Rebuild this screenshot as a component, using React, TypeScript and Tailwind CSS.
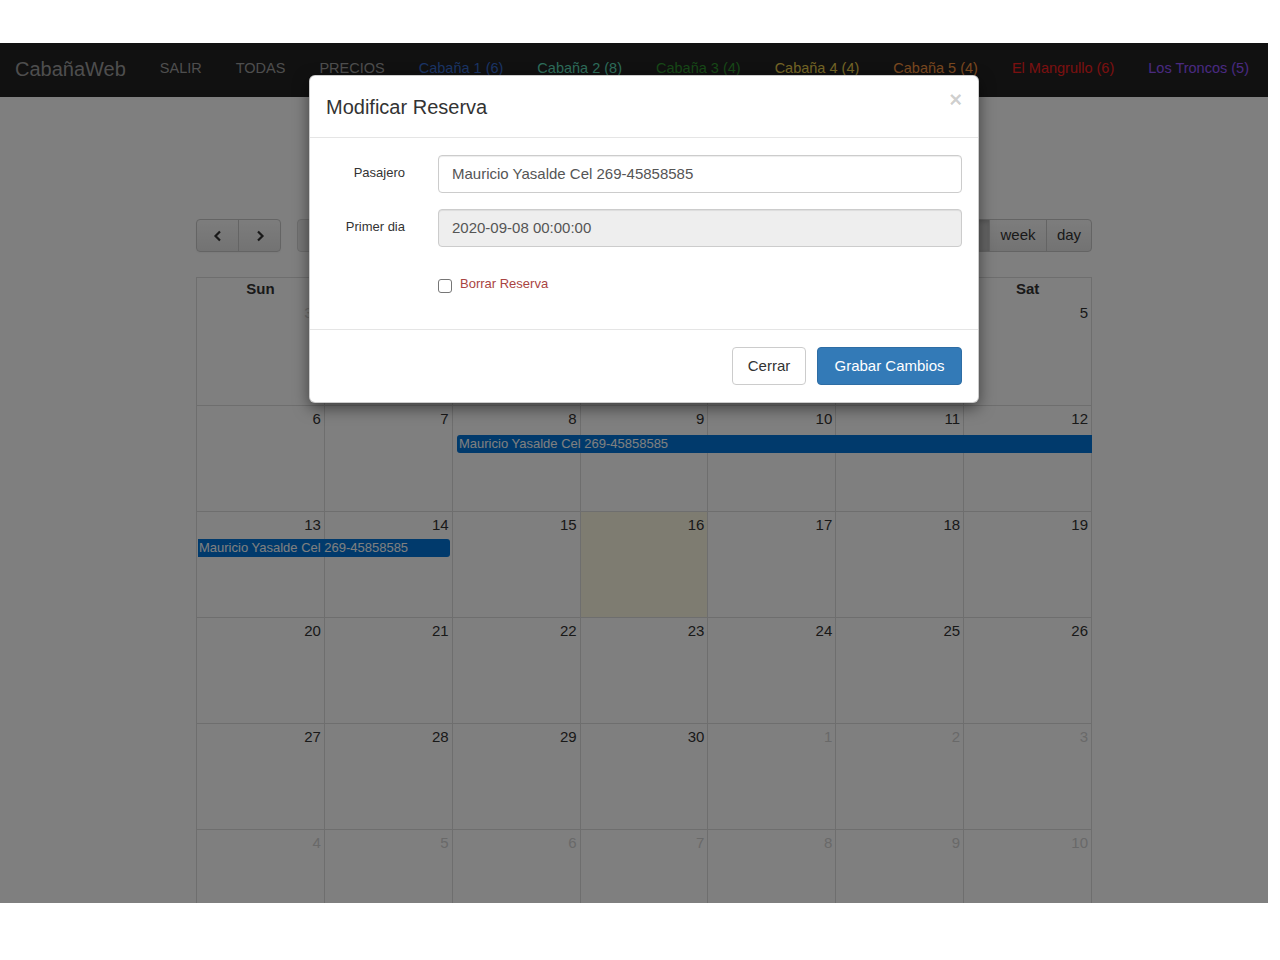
import React from "react";

type Cell = { d: number; o?: boolean; today?: boolean };

const rows: Cell[][] = [
  [{ d: 30, o: true }, { d: 31, o: true }, { d: 1 }, { d: 2 }, { d: 3 }, { d: 4 }, { d: 5 }],
  [{ d: 6 }, { d: 7 }, { d: 8 }, { d: 9 }, { d: 10 }, { d: 11 }, { d: 12 }],
  [{ d: 13 }, { d: 14 }, { d: 15 }, { d: 16, today: true }, { d: 17 }, { d: 18 }, { d: 19 }],
  [{ d: 20 }, { d: 21 }, { d: 22 }, { d: 23 }, { d: 24 }, { d: 25 }, { d: 26 }],
  [{ d: 27 }, { d: 28 }, { d: 29 }, { d: 30 }, { d: 1, o: true }, { d: 2, o: true }, { d: 3, o: true }],
  [{ d: 4, o: true }, { d: 5, o: true }, { d: 6, o: true }, { d: 7, o: true }, { d: 8, o: true }, { d: 9, o: true }, { d: 10, o: true }],
];

const days = ["Sun", "Mon", "Tue", "Wed", "Thu", "Fri", "Sat"];

const EVENT = "Mauricio Yasalde Cel 269-45858585";

function Chevron({ dir }: { dir: "l" | "r" }) {
  return (
    <svg width="10" height="12" viewBox="0 0 10 12" fill="none">
      <path
        d={dir === "l" ? "M7 1.5 L2.5 6 L7 10.5" : "M3 1.5 L7.5 6 L3 10.5"}
        stroke="#333"
        strokeWidth="2.2"
      />
    </svg>
  );
}

export default function App() {
  return (
    <div className="w-[1280px] h-[960px] bg-white pt-[43px] font-['Liberation_Sans',Arial,Helvetica,sans-serif] overflow-hidden">
      <div className="relative w-[1268px] h-[860px] overflow-hidden bg-white">
        {/* Navbar */}
        <nav className="h-[54px] bg-[#222] flex items-center pl-[15px] gap-[34px] text-[14.5px] pb-[3px]">
          <span className="text-[#9d9d9d] text-[20px]">CabañaWeb</span>
          <span className="text-[#9d9d9d]">SALIR</span>
          <span className="text-[#9d9d9d]">TODAS</span>
          <span className="text-[#9d9d9d]">PRECIOS</span>
          <span className="text-[#366acc]">Cabaña 1 (6)</span>
          <span className="text-[#5cdab6]">Cabaña 2 (8)</span>
          <span className="text-[#2f922f]">Cabaña 3 (4)</span>
          <span className="text-[#e8cc4c]">Cabaña 4 (4)</span>
          <span className="text-[#f29240]">Cabaña 5 (4)</span>
          <span className="text-[#f42020]">El Mangrullo (6)</span>
          <span className="text-[#9454ff]">Los Troncos (5)</span>
        </nav>

        {/* Calendar */}
        <div className="pl-[196px] pt-[122px]">
          <div className="w-[896px]">
            <div className="flex items-center justify-between h-[33px] mb-[25px]">
              <div className="flex items-center gap-[16px]">
                <div className="flex h-[33px] rounded-[4px] border border-[#c8c8c8] bg-gradient-to-b from-[#fafafa] to-[#e6e6e6] shadow-[inset_0_1px_0_rgba(255,255,255,0.2),0_1px_2px_rgba(0,0,0,0.05)]">
                  <div className="w-[42px] flex items-center justify-center border-r border-[#c8c8c8]">
                    <Chevron dir="l" />
                  </div>
                  <div className="w-[41px] flex items-center justify-center">
                    <Chevron dir="r" />
                  </div>
                </div>
                <div className="h-[33px] w-[60px] rounded-[4px] border border-[#c8c8c8] bg-[#e8e8e8] opacity-70" />
              </div>
              <div className="flex h-[33px] rounded-[4px] border border-[#c8c8c8] bg-gradient-to-b from-[#fafafa] to-[#e6e6e6] text-[15px] text-[#333]">
                <div className="w-[62px] flex items-center justify-center border-r border-[#c8c8c8] bg-[#cccccc] shadow-[inset_0_2px_4px_rgba(0,0,0,0.15)] rounded-l-[4px]">
                  month
                </div>
                <div className="w-[57px] flex items-center justify-center border-r border-[#c8c8c8]">
                  week
                </div>
                <div className="w-[44px] flex items-center justify-center">day</div>
              </div>
            </div>

            <div className="border-l border-[#ddd]">
              <div className="grid grid-cols-7 h-[23px] border-t border-[#ddd]">
                {days.map((d) => (
                  <div
                    key={d}
                    className="border-r border-b border-[#ddd] text-center text-[15px] font-bold text-[#333] leading-[22px]"
                  >
                    {d}
                  </div>
                ))}
              </div>
              {rows.map((r, ri) => (
                <div key={ri} className="relative grid grid-cols-7 h-[106px]">
                  {r.map((c, ci) => (
                    <div
                      key={ci}
                      className={`border-r border-b border-[#ddd] text-right pr-[3px] pt-[3px] text-[15px] leading-[20px] ${
                        c.today ? "bg-[#fcf8e3]" : "bg-white"
                      } ${c.o ? "text-[#d2d2d2]" : "text-[#333]"}`}
                    >
                      {c.d}
                    </div>
                  ))}
                  {ri === 1 && (
                    <div className="absolute left-[260px] right-0 top-[29px] h-[18px] bg-[#0275d8] rounded-l-[3px] text-white text-[13px] leading-[18px] pl-[2px] whitespace-nowrap overflow-hidden">
                      {EVENT}
                    </div>
                  )}
                  {ri === 2 && (
                    <div className="absolute left-[1px] w-[252px] top-[27px] h-[18px] bg-[#0275d8] rounded-r-[3px] text-white text-[13px] leading-[18px] pl-[1px] whitespace-nowrap overflow-hidden">
                      {EVENT}
                    </div>
                  )}
                </div>
              ))}
            </div>
          </div>
        </div>

        {/* Backdrop */}
        <div className="absolute inset-0 bg-black/50" />

        {/* Modal */}
        <div className="absolute left-[309px] top-[32px] w-[670px] bg-white rounded-[6px] border border-black/20 shadow-[0_5px_15px_rgba(0,0,0,0.5)]">
          <div className="h-[62px] border-b border-[#e5e5e5] flex items-center justify-between pl-[16px] pr-[16px]">
            <h4 className="text-[20px] text-[#333] leading-[28px] pt-[1px]">Modificar Reserva</h4>
            <span className="text-[22px] font-bold text-black/20 leading-none -mt-[14px]">×</span>
          </div>
          <div className="px-[16px] pt-[17px] pb-[37px]">
            <div className="flex items-center">
              <label className="w-[79px] text-right text-[13px] text-[#333] -mt-[2px]">Pasajero</label>
              <div className="ml-[33px] flex-1 h-[38px] border border-[#ccc] rounded-[4px] shadow-[inset_0_1px_1px_rgba(0,0,0,0.075)] flex items-center pl-[13px] text-[15px] text-[#555]">
                {EVENT}
              </div>
            </div>
            <div className="flex items-center mt-[16px]">
              <label className="w-[79px] text-right text-[13px] text-[#333] -mt-[2px]">Primer dia</label>
              <div className="ml-[33px] flex-1 h-[38px] border border-[#ccc] rounded-[4px] bg-[#eee] shadow-[inset_0_1px_1px_rgba(0,0,0,0.075)] flex items-center pl-[13px] text-[15px] text-[#555]">
                2020-09-08 00:00:00
              </div>
            </div>
            <div className="flex items-center mt-[29px] ml-[112px] h-[16px]">
              <span className="w-[14px] h-[14px] border border-[#767676] rounded-[3px] bg-white mt-[3px]" />
              <span className="ml-[8px] text-[13px] text-[#a94442]">Borrar Reserva</span>
            </div>
          </div>
          <div className="border-t border-[#e5e5e5] h-[73px] flex items-center justify-end gap-[11px] pr-[16px]">
            <button className="h-[38px] w-[74px] border border-[#ccc] rounded-[4px] bg-white text-[15px] text-[#333]">
              Cerrar
            </button>
            <button className="h-[38px] w-[145px] border border-[#2e6da4] rounded-[4px] bg-[#337ab7] text-[15px] text-white">
              Grabar Cambios
            </button>
          </div>
        </div>
      </div>
    </div>
  );
}
